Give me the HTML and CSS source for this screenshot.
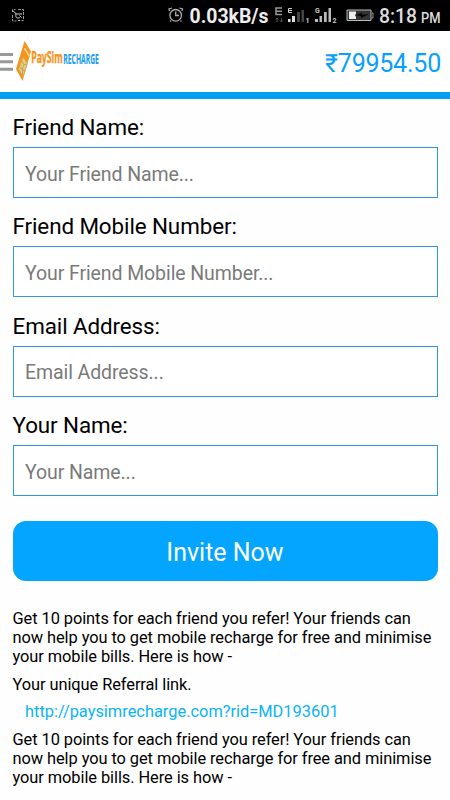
FILE: index.html
```html
<!DOCTYPE html>
<html lang="en">
<head>
<meta charset="utf-8">
<title>PaySim Recharge</title>
<link rel="stylesheet" href="styles.css">
</head>
<body>
<div class="status">
  <svg width="450" height="31" viewBox="0 0 450 31">
    <g fill="none" stroke="#999" stroke-width="1">
      <path d="M12.500 12v-2.500h3M18 9.500h5.500v11h-2M12.500 15v6h4" stroke-dasharray="3 1"/>
      <path d="M12.500 10.500l4 3.500M15 14h7M16 14.500c-1 4 2 4 4 3M19.500 15.500l2 2M18 20.500h2" stroke="#ccc"/>
    </g>
    <g fill="none" stroke="#aaa" stroke-width="1.300">
      <circle cx="175.700" cy="15.300" r="5.800"/>
      <path d="M175.700 11.500v4h3.300M169.500 11l-.5-2 3-1M182 11l.5-2-3-1M171 20.500l-1 1M180.500 20.500l1 1"/>
    </g>
    <text class="bold" x="189.500" y="22.700" font-size="20" textLength="79" lengthAdjust="spacingAndGlyphs" fill="#eee">0.03kB/s</text>
    <path d="M282 8h-6v6.500h6M276 11.200h6" fill="none" stroke="#999" stroke-width="1.500"/>
    <path d="M277 22v-4m-1.500 1.500l1.500-1.500 1.500 1.500M281.500 18v4m-1.500-1.500l1.500 1.500 1.500-1.500" fill="none" stroke="#555"/>
    <path d="M292 8.500h-3.500v4h3.500M288.500 10.500h3.500" fill="none" stroke="#ccc" stroke-width="1"/>
    <path d="M288 19h2.500v3H288zM292 16h3v6h-3z" fill="#ddd"/>
    <path d="M297 12h3v10h-3zM301.500 10h2.500v12h-2.500z" fill="#444"/>
    <text class="bold" x="305.500" y="22.500" font-size="7" fill="#ccc">1</text>
    <text class="bold" x="315" y="13" font-size="7" fill="#ccc">G</text>
    <path d="M315 19h3v3h-3zM319.500 16h2.500v6h-2.500zM324 12h2.700v10H324zM328.500 8h2.500v14h-2.500z" fill="#bbb"/>
    <text class="bold" x="332.500" y="22.500" font-size="7" fill="#ccc">2</text>
    <path d="M347 10h24v10.500h-24z" fill="#333" stroke="#bbb"/>
    <path d="M371.500 13h1.500v5h-1.500" fill="none" stroke="#999"/>
    <path d="M349 11.500h7v2.500l-1 1 1 2v2h-7z" fill="#eee"/>
    <path d="M355 15l7-2v2l7-1-8 4v-2z" fill="#000"/>
    <text class="medium" x="379" y="22.700" font-size="20" textLength="38" lengthAdjust="spacingAndGlyphs" fill="#ddd">8:18</text>
    <text class="medium" x="421" y="22.700" font-size="14" textLength="19.500" lengthAdjust="spacingAndGlyphs" fill="#ddd">PM</text>
  </svg>
</div>
<header class="header">
  <svg width="105" height="60" viewBox="0 31 105 60">
    <path d="M0 53h13v3H0zM0 60.300h13v3H0zM0 67.800h13v3H0z" fill="#999"/>
    <path d="M24.500 41L31 51.500 22.500 81 16 69z" fill="#f7941d"/>
    <path d="M24.500 48.500l5 7.500" stroke="#f8d9aa" stroke-width="1.500"/>
    <path d="M23 57l4.500 6-4.500 14-4.500-8z" fill="#e5cd86" stroke="#c99a35" stroke-width=".6"/>
    <path d="M21.500 61l3 4 2-1M19.500 67l3 2 1-4M22.500 69v6M23 70l2 1" fill="none" stroke="#a98236" stroke-width=".6"/>
    <text class="logo" transform="translate(31.200 63.300) scale(.525 1)" font-size="16.500" fill="#f7941d" stroke="#f7941d" stroke-width=".4">PaySim</text>
    <text class="logo" transform="translate(63.300 63.700) scale(.502 1)" font-size="13.500" fill="#1a9df0" stroke="#1a9df0" stroke-width=".2">RECHARGE</text>
  </svg>
  <span class="balance">₹79954.50</span>
</header>
<main class="main">
  <form class="form">
    <label class="field"><span class="label">Friend Name:</span><input class="input" type="text" placeholder="Your Friend Name..."></label>
    <label class="field"><span class="label">Friend Mobile Number:</span><input class="input" type="text" placeholder="Your Friend Mobile Number..."></label>
    <label class="field"><span class="label">Email Address:</span><input class="input" type="text" placeholder="Email Address..."></label>
    <label class="field"><span class="label">Your Name:</span><input class="input" type="text" placeholder="Your Name..."></label>
    <button class="button" type="button">Invite Now</button>
  </form>
  <p class="text">Get 10 points for each friend you refer! Your friends can<br>now help you to get mobile recharge for free and minimise<br>your mobile bills. Here is how -</p>
  <p class="text">Your unique Referral link.</p>
  <p class="text link">http://paysimrecharge.com?rid=MD193601</p>
  <p class="text">Get 10 points for each friend you refer! Your friends can<br>now help you to get mobile recharge for free and minimise<br>your mobile bills. Here is how -</p>
</main>
</body>
</html>
```
FILE: styles.css
```css
* { box-sizing: border-box; }
body { margin: 0; height: 800px; overflow: hidden; background: #fefefe; color: #000; font-family: Roboto, sans-serif; }
svg { display: block; font-family: Roboto, sans-serif; }
.bold { font-weight: 700; }
.medium { font-weight: 500; }
.logo { font-family: "Open Sans", sans-serif; font-weight: 700; }
.status { height: 31px; background: #000; }
.header { display: flex; justify-content: space-between; height: 67.500px; padding-right: 9px; background: #fff; border-bottom: 7px solid #059ff2; }
.balance { color: #08a0fb; font-size: 25px; line-height: 65px; letter-spacing: -.22px; }
.main { padding: 14.500px 12.500px 0; }
.field { display: block; height: 99.400px; }
.label { display: block; height: 34px; font-size: 22.400px; line-height: 28px; letter-spacing: -.09px; white-space: nowrap; }
.input { display: block; width: 100%; height: 51px; margin: 0; padding: 3px 11.500px 0; border: 1px solid #2d98e8; border-radius: 0; background: #fff; font-family: inherit; font-size: 19.500px; letter-spacing: -.09px; }
.input::placeholder { color: #7a7a7a; }
.button { display: block; width: 100%; height: 60px; margin: 10.500px 0 29px; padding: 3px 0 0; border: 0; border-radius: 13px; background: #03a5ff; color: #fff; font-family: inherit; font-size: 25px; letter-spacing: 0; }
.text { margin: 0 0 9.800px; font-size: 16.400px; line-height: 18.800px; letter-spacing: -.07px; white-space: nowrap; }
.text.link { padding-left: 12.500px; color: #08b4f5; margin-top: -2px; letter-spacing: 0; }
```
